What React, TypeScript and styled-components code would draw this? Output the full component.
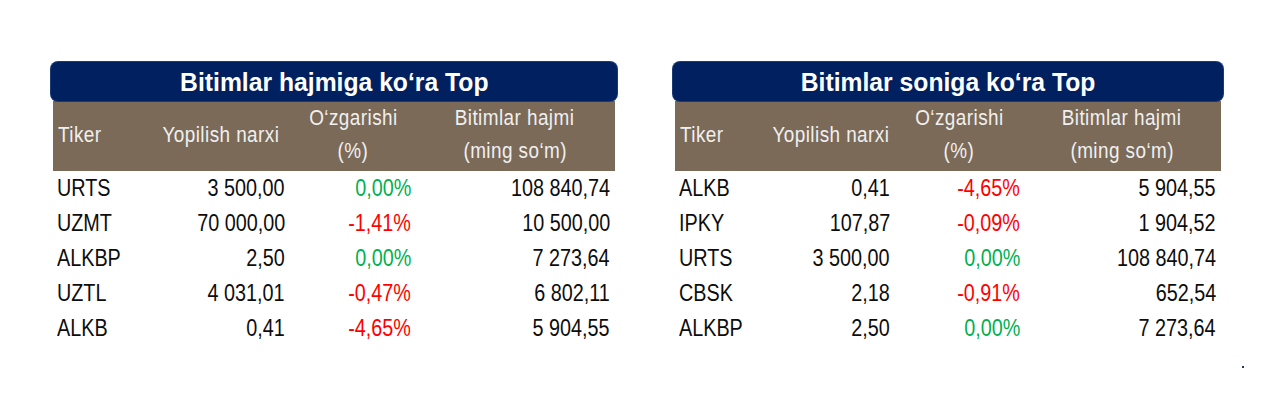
import React from "react";
import styled, { createGlobalStyle } from "styled-components";

const Global = createGlobalStyle`
  html, body { margin: 0; padding: 0; background: #ffffff; }
  body { font-family: "Liberation Sans", Arial, sans-serif; }
`;

const Page = styled.div`
  width: 1274px;
  height: 408px;
  box-sizing: border-box;
  padding: 62px 0 0 51px;
  display: flex;
  gap: 56px;
  position: relative;
`;

const Table = styled.div<{ $w: number }>`
  width: ${(p) => p.$w}px;
  display: flex;
  flex-direction: column;
`;

const Title = styled.div`
  height: 39px;
  background: #002060;
  border-radius: 7px;
  color: #ffffff;
  font-weight: bold;
  font-size: 26px;
  display: flex;
  align-items: center;
  justify-content: center;
  position: relative;
  z-index: 1;
  box-shadow: 0 0 0 1px #1c3a78;
  padding-top: 2px;
  box-sizing: border-box;
`;

const Narrow = styled.span<{ $s: number; $o?: string }>`
  display: inline-block;
  transform: scaleX(${(p) => p.$s});
  transform-origin: ${(p) => p.$o || "center"};
  white-space: nowrap;
`;

const Grid = styled.div<{ $cols: string }>`
  display: grid;
  grid-template-columns: ${(p) => p.$cols};
  margin: 0 2px 0 2px;
`;

const Head = styled(Grid)`
  background: #7b6a58;
  height: 70px;
  box-sizing: border-box;
  padding-bottom: 6px;
  color: #f0f0f0;
  font-size: 22px;
  letter-spacing: 0.5px;
`;

const HeadCell = styled.div<{ $left?: boolean }>`
  display: flex;
  flex-direction: column;
  justify-content: center;
  align-items: ${(p) => (p.$left ? "flex-start" : "center")};
  padding-left: ${(p) => (p.$left ? "5px" : "0")};
  line-height: 33px;
  text-align: center;
`;

const Row = styled(Grid)`
  height: 35px;
  align-items: center;
  font-size: 23px;
  color: #0d0d0d;
`;

const Cell = styled.div<{ $align?: "left" | "right"; $color?: string; $pr?: number }>`
  text-align: ${(p) => p.$align || "right"};
  color: ${(p) => p.$color || "inherit"};
  padding-left: ${(p) => (p.$align === "left" ? "4px" : "0")};
  padding-right: ${(p) => p.$pr ?? 0}px;
  white-space: nowrap;
`;

const Dot = styled.div`
  position: absolute;
  left: 1242px;
  top: 366px;
  width: 2px;
  height: 2px;
  background: #203864;
`;

type R = [string, string, string, string];

const GREEN = "#00b050";
const RED = "#ff0000";
const S = 0.86;

const left: R[] = [
  ["URTS", "3 500,00", "0,00%", "108 840,74"],
  ["UZMT", "70 000,00", "-1,41%", "10 500,00"],
  ["ALKBP", "2,50", "0,00%", "7 273,64"],
  ["UZTL", "4 031,01", "-0,47%", "6 802,11"],
  ["ALKB", "0,41", "-4,65%", "5 904,55"],
];

const right: R[] = [
  ["ALKB", "0,41", "-4,65%", "5 904,55"],
  ["IPKY", "107,87", "-0,09%", "1 904,52"],
  ["URTS", "3 500,00", "0,00%", "108 840,74"],
  ["CBSK", "2,18", "-0,91%", "652,54"],
  ["ALKBP", "2,50", "0,00%", "7 273,64"],
];

function TopTable({ title, rows, w, cols, pr }: { title: string; rows: R[]; w: number; cols: string; pr: number[] }) {
  return (
    <Table $w={w}>
      <Title>
        <Narrow $s={0.95}>{title}</Narrow>
      </Title>
      <Head $cols={cols}>
        <HeadCell $left>
          <Narrow $s={S} $o="left">Tiker</Narrow>
        </HeadCell>
        <HeadCell>
          <Narrow $s={S}>Yopilish narxi</Narrow>
        </HeadCell>
        <HeadCell>
          <Narrow $s={S}>O‘zgarishi</Narrow>
          <Narrow $s={S}>(%)</Narrow>
        </HeadCell>
        <HeadCell>
          <Narrow $s={S}>Bitimlar hajmi</Narrow>
          <Narrow $s={S}>(ming so‘m)</Narrow>
        </HeadCell>
      </Head>
      {rows.map((r, i) => (
        <Row key={i} $cols={cols}>
          <Cell $align="left">
            <Narrow $s={S} $o="left">{r[0]}</Narrow>
          </Cell>
          <Cell $pr={pr[0]}>
            <Narrow $s={S} $o="right">{r[1]}</Narrow>
          </Cell>
          <Cell $pr={pr[1]} $color={r[2].startsWith("-") ? RED : GREEN}>
            <Narrow $s={S} $o="right">{r[2]}</Narrow>
          </Cell>
          <Cell $pr={pr[2]}>
            <Narrow $s={S} $o="right">{r[3]}</Narrow>
          </Cell>
        </Row>
      ))}
    </Table>
  );
}

export default function App() {
  return (
    <>
      <Global />
      <Page>
        <TopTable title="Bitimlar hajmiga ko‘ra Top" rows={left} w={566} cols="98px 140px 124px 1fr" pr={[6, 4, 5]} />
        <TopTable title="Bitimlar soniga ko‘ra Top" rows={right} w={550} cols="92px 128px 128px 1fr" pr={[5, 3, 5]} />
        <Dot />
      </Page>
    </>
  );
}
